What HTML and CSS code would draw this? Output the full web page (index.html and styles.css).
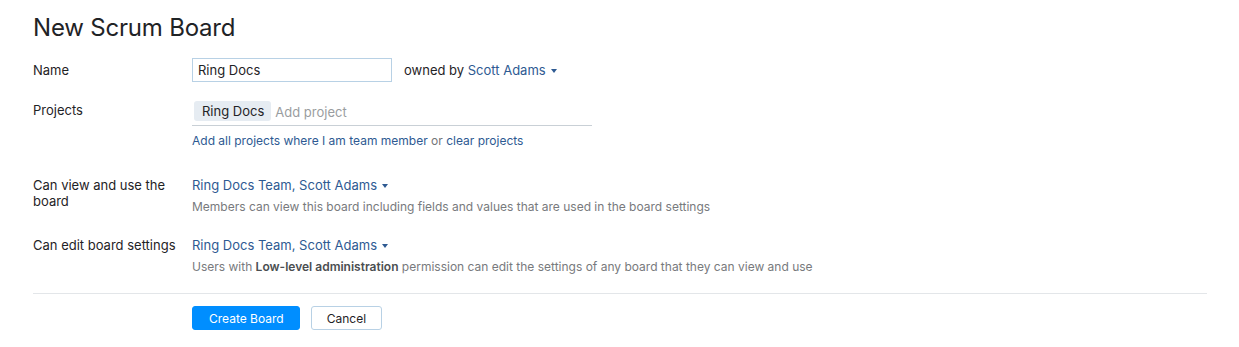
FILE: index.html
```html
<!DOCTYPE html>
<html>
<head>
<meta charset="utf-8">
<link rel="stylesheet" href="styles.css">
</head>
<body>
<div class="page">
  <h1 class="title">New Scrum Board</h1>
  <div class="form">
    <div class="row row-name">
      <div class="label">Name</div>
      <div class="value inline">
        <input class="input" type="text" value="Ring Docs">
        <span class="owned">owned by <a class="link">Scott Adams<span class="caret"></span></a></span>
      </div>
    </div>
    <div class="row row-projects">
      <div class="label">Projects</div>
      <div class="value">
        <div class="tags">
          <span class="tag">Ring Docs</span>
          <span class="placeholder">Add project</span>
        </div>
        <div class="hint-links"><a class="link">Add all projects where I am team member</a> or <a class="link">clear projects</a></div>
      </div>
    </div>
    <div class="row row-view">
      <div class="label">Can view and use the board</div>
      <div class="value">
        <a class="link">Ring Docs Team, Scott Adams<span class="caret"></span></a>
        <div class="hint">Members can view this board including fields and values that are used in the board settings</div>
      </div>
    </div>
    <div class="row row-edit">
      <div class="label">Can edit board settings</div>
      <div class="value">
        <a class="link">Ring Docs Team, Scott Adams<span class="caret"></span></a>
        <div class="hint">Users with <b>Low-level administration</b> permission can edit the settings of any board that they can view and use</div>
      </div>
    </div>
  </div>
  <div class="divider"></div>
  <div class="actions">
    <button class="btn btn-primary">Create Board</button>
    <button class="btn">Cancel</button>
  </div>
</div>
</body>
</html>
```
FILE: styles.css
```css
html, body {
  margin: 0;
  padding: 0;
  background: #ffffff;
}
body {
  font-family: Inter, "Noto Sans", sans-serif;
  font-size: 13px;
  line-height: 20px;
  color: #1f2326;
}
.page {
  padding: 0 32px 0 33px;
}
.title {
  margin: 0;
  padding-top: 12px;
  font-size: 24px;
  line-height: 32px;
  font-weight: 400;
  letter-spacing: -0.2px;
}
.form {
  margin-top: 14px;
}
.row {
  display: flex;
}
.label {
  width: 159px;
  flex: none;
  padding-right: 16px;
  box-sizing: border-box;
  line-height: 16px;
}
.value {
  flex: 1;
}
.inline {
  display: flex;
  align-items: center;
}
.row-name .label {
  padding-top: 4px;
}
.input {
  width: 200px;
  height: 24px;
  box-sizing: border-box;
  border: 1px solid #b8d1e5;
  border-radius: 0;
  padding: 0 5px;
  font-family: inherit;
  font-size: 13px;
  color: #1f2326;
  outline: none;
  margin: 0;
}
.owned {
  margin-left: 12px;
}
.link {
  color: #2e5a92;
  text-decoration: none;
}
.caret {
  display: inline-block;
  width: 0;
  height: 0;
  border-left: 3px solid transparent;
  border-right: 3px solid transparent;
  border-top: 4px solid #2e5a92;
  margin-left: 5px;
  vertical-align: 2px;
}
.row-projects {
  margin-top: 18px;
}
.row-projects .label {
  padding-top: 2px;
}
.tags {
  width: 400px;
  height: 26px;
  border-bottom: 1px solid #c9d0d6;
  display: flex;
  align-items: flex-start;
  padding-left: 2px;
  box-sizing: border-box;
  padding-top: 1px;
}
.tag {
  background: #e6ecf2;
  border-radius: 3px;
  padding: 0 7px 0 8px;
  height: 20px;
  line-height: 20px;
  font-size: 13px;
  color: #1f2326;
}
.placeholder {
  color: #9a9da0;
  margin-left: 4px;
  line-height: 23px;
  font-size: 13px;
}
.hint-links {
  margin-top: 5px;
  font-size: 12px;
  line-height: 20px;
  color: #737577;
}
.row-view {
  margin-top: 24px;
}
.row-view .label,
.row-edit .label {
  padding-top: 2px;
}
.hint {
  margin-top: 4px;
  font-size: 12px;
  line-height: 16px;
  color: #787a7d;
}
.hint b {
  font-weight: 600;
  color: #4b4e51;
}
.row-edit {
  margin-top: 20px;
}
.divider {
  height: 1px;
  background: #e3e6e9;
  margin-top: 18px;
}
.actions {
  margin-top: 12px;
  padding-left: 159px;
  display: flex;
  gap: 11px;
}
.btn {
  height: 24px;
  box-sizing: border-box;
  font-family: inherit;
  font-size: 12px;
  padding: 0 15px;
  background: #ffffff;
  border: 1px solid #b8d1e5;
  border-radius: 3px;
  color: #1f2326;
  margin: 0;
}
.btn-primary {
  background: #008eff;
  border-color: #008eff;
  color: #ffffff;
  padding: 0 15px 0 16px;
}
```
